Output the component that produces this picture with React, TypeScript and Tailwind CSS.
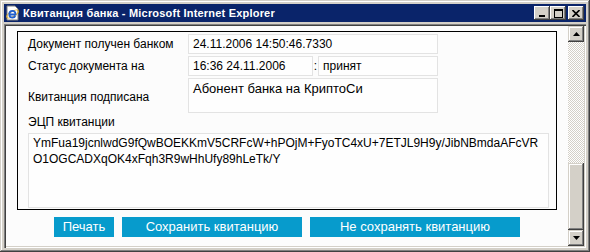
import React from "react";

const F = { fontFamily: '"Liberation Sans", Arial, sans-serif' };

function TitleBtn({ children }: { children: React.ReactNode }) {
  return (
    <div className="w-[16px] h-[14px] bg-[#d4d0c8] shadow-[inset_-1px_-1px_#404040,inset_1px_1px_#ffffff,inset_-2px_-2px_#808080,inset_2px_2px_#d4d0c8] flex items-center justify-center">
      {children}
    </div>
  );
}

function ScrollBtn({ up }: { up: boolean }) {
  return (
    <div className="w-[16px] h-[16px] bg-[#d4d0c8] shadow-[inset_-1px_-1px_#404040,inset_1px_1px_#d4d0c8,inset_-2px_-2px_#808080,inset_2px_2px_#ffffff] flex items-center justify-center">
      <svg width="7" height="4" viewBox="0 0 7 4">
        {up ? <path d="M3.5 0 L7 4 L0 4 Z" fill="#000" /> : <path d="M0 0 L7 0 L3.5 4 Z" fill="#000" />}
      </svg>
    </div>
  );
}

function IEIcon() {
  return (
    <svg width="16" height="16" viewBox="0 0 16 16">
      <path d="M2 1 H10 L13 4 V15 H2 Z" fill="#ffffff" stroke="#808080" strokeWidth="1" />
      <ellipse cx="7.5" cy="9" rx="6.5" ry="2.5" fill="none" stroke="#e8b020" strokeWidth="1" transform="rotate(-30 7.5 9)" />
      <path d="M4.5 9.5 H10.5 C10.5 7 9.2 5.8 7.5 5.8 C5.6 5.8 4.3 7.3 4.3 9.2 C4.3 11.2 5.6 12.6 7.6 12.6 C8.8 12.6 9.8 12 10.3 11" fill="none" stroke="#1f5fd0" strokeWidth="1.8" />
    </svg>
  );
}

function Box({ className, children, big }: { className: string; children?: React.ReactNode; big?: boolean }) {
  return (
    <div
      className={`border border-[#e3e3e3] bg-[#fefefe] pl-[4px] text-black ${big ? "text-[13px] leading-[16px] pt-[2px]" : "text-[12px] leading-[18px] flex items-center"} ${className}`}
      style={F}
    >
      {children}
    </div>
  );
}

export default function App() {
  return (
    <div
      className="w-[590px] h-[252px] bg-[#d4d0c8] p-[4px] flex flex-col shadow-[inset_-1px_-1px_#404040,inset_1px_1px_#d4d0c8,inset_-2px_-2px_#808080,inset_2px_2px_#ffffff]"
      style={F}
    >
      {/* Title bar */}
      <div className="h-[18px] bg-[#0a246a] flex items-center pl-[1px] pr-[2px] shrink-0">
        <IEIcon />
        <div className="ml-[2px] text-white font-bold text-[11px] tracking-[0.2px] leading-[18px] whitespace-nowrap" style={F}>
          Квитанция банка - Microsoft Internet Explorer
        </div>
        <div className="ml-auto flex items-center">
          <TitleBtn>
            <svg width="8" height="8" viewBox="0 0 8 8">
              <rect x="1" y="6" width="6" height="2" fill="#000" />
            </svg>
          </TitleBtn>
          <TitleBtn>
            <svg width="9" height="9" viewBox="0 0 9 9">
              <rect x="0.5" y="0.5" width="8" height="8" fill="none" stroke="#000" strokeWidth="1" />
              <rect x="0" y="0" width="9" height="2" fill="#000" />
            </svg>
          </TitleBtn>
          <div className="ml-[2px]">
            <TitleBtn>
              <svg width="8" height="7" viewBox="0 0 8 7">
                <path d="M0.5 0 L7.5 7 M7.5 0 L0.5 7" stroke="#000" strokeWidth="1.6" />
              </svg>
            </TitleBtn>
          </div>
        </div>
      </div>

      {/* Client area */}
      <div className="mt-[2px] flex-1 flex shadow-[inset_1px_1px_#808080,inset_2px_2px_#404040,inset_-1px_-1px_#ffffff,inset_-2px_-2px_#d4d0c8] p-[2px]">
        <div className="flex-1 bg-[#fcfcfc] flex flex-col items-center overflow-hidden">
          {/* Black panel */}
          <div className="mt-[5px] w-[540px] h-[179px] border border-black flex flex-col pl-[10px] pt-[2px]">
            <div className="flex h-[20px]">
              <div className="w-[160px] text-[12px] leading-[20px] text-black">Документ получен банком</div>
              <Box className="w-[250px] h-[20px]">24.11.2006 14:50:46.7330</Box>
            </div>
            <div className="flex h-[20px] mt-[2px]">
              <div className="w-[160px] text-[12px] leading-[20px] text-black">Статус документа на</div>
              <Box className="w-[125px] h-[20px]">16:36 24.11.2006</Box>
              <div className="w-[5px] text-[12px] leading-[20px] text-black text-center">:</div>
              <Box className="w-[120px] h-[20px]">принят</Box>
            </div>
            <div className="flex h-[35px] mt-[2px]">
              <div className="w-[160px] text-[12px] flex items-center pt-[2px] text-black">Квитанция подписана</div>
              <Box className="w-[250px] h-[35px]" big>Абонент банка на КриптоСи</Box>
            </div>
            <div className="h-[16px] mt-[1px] text-[12px] leading-[16px] text-black">ЭЦП квитанции</div>
            <div className="mt-[3px] w-[521px] h-[75px] border border-[#e3e3e3] bg-[#fefefe] pl-[4px] pt-[1px] text-[12px] leading-[16px] text-black whitespace-nowrap">
              <div>YmFua19jcnlwdG9fQwBOEKKmV5CRFcW+hPOjM+FyoTC4xU+7ETJL9H9y/JibNBmdaAFcVR</div>
              <div>O1OGCADXqOK4xFqh3R9wHhUfy89hLeTk/Y</div>
            </div>
          </div>
          {/* Buttons */}
          <div className="mt-[7px] flex gap-[8px]">
            <div className="w-[60px] h-[20px] bg-[#079bcc] text-white text-[13px] leading-[20px] text-center">Печать</div>
            <div className="w-[180px] h-[20px] bg-[#079bcc] text-white text-[13px] leading-[20px] text-center">Сохранить квитанцию</div>
            <div className="w-[210px] h-[20px] bg-[#079bcc] text-white text-[13px] leading-[20px] text-center">Не сохранять квитанцию</div>
          </div>
        </div>
        {/* Scrollbar */}
        <div className="w-[16px] flex flex-col">
          <ScrollBtn up />
          <div className="flex-1 bg-[repeating-conic-gradient(#ffffff_0%_25%,#d4d0c8_0%_50%)] bg-[length:2px_2px]" />
          <div className="h-[67px] bg-[#d4d0c8] shadow-[inset_-1px_-1px_#404040,inset_1px_1px_#d4d0c8,inset_-2px_-2px_#808080,inset_2px_2px_#ffffff]" />
          <ScrollBtn up={false} />
        </div>
      </div>
    </div>
  );
}
